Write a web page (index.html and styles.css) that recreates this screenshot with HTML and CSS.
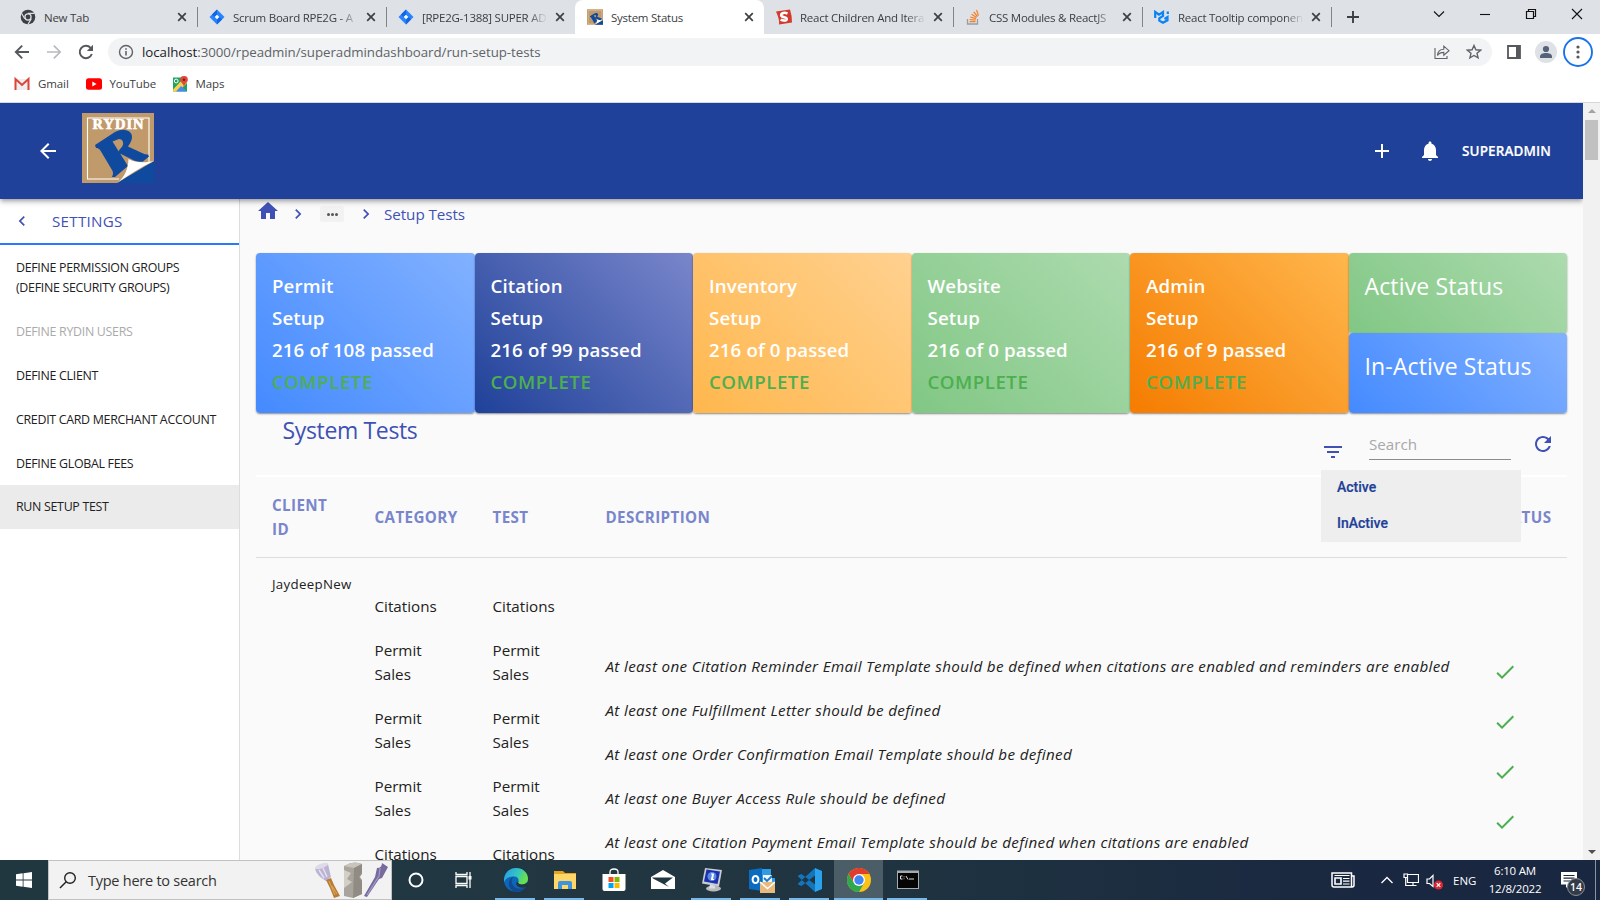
FILE: index.html
```html
<!DOCTYPE html>
<html lang="en">
<head>
<meta charset="utf-8">
<title>System Status</title>
<link rel="stylesheet" href="styles.css">
</head>
<body>
<svg width="0" height="0" class="defs">
  <defs>
    <symbol id="x" viewBox="0 0 10 10"><path d="M1.2 1.2l7.6 7.6M8.8 1.2L1.2 8.8" stroke="#3c4043" stroke-width="1.7" fill="none"/></symbol>
    <symbol id="jira" viewBox="0 0 16 16"><path d="M8 .5L15.5 8 8 15.5.5 8z" fill="#2684ff"/><path d="M8 .5v5L5.500 8 3 5.500z" fill="#1266e0"/><path d="M8 15.500v-5L10.500 8 13 10.500z" fill="#1266e0"/><path d="M8 5.700L10.300 8 8 10.300 5.700 8z" fill="#fff"/></symbol>
    <symbol id="next" viewBox="0 0 24 24"><path d="M10 6L8.590 7.410 13.170 12l-4.580 4.590L10 18l6-6z" fill="#3f51b5"/></symbol>
    <symbol id="check" viewBox="0 0 24 24"><path d="M9 16.170L4.830 12l-1.420 1.410L9 19 21 7l-1.410-1.410z" fill="#4caf50"/></symbol>
    <symbol id="rydin" viewBox="0 0 72 70"><path d="M0 0h72v70H0z" fill="#c19a6b"/><path d="M37 66H5.500V5H67v45" fill="none" stroke="#fff" stroke-width="1.100"/><path d="M13 32L33 19q7-3.500 12-1.500c8 3 5 11 1 16l14 6.500q3 1.500 6 1.500l1 2-6 5q-4 1-9-1L38 40.500c-2-2-1-3.500 1-5.500 4-4 2-9-2-9l-6.500 2.500L46 53 33 64h-3q2-4 0-7L19 38.500q-2-4-5-3.500z" fill="#104a9f"/><path d="M72 48v22H35z" fill="#104a9f"/><path d="M35 70c8-6 11-14 11.500-24 7 4 16 4 25.500 2-13 6-25 14-37 22z" fill="#fff"/></symbol>
  </defs>
</svg>

<header class="tabs">
  <div class="tab"><svg class="fav" viewBox="0 0 16 16"><circle cx="8" cy="8" r="7.300" fill="#3c4043"/><circle cx="8" cy="8" r="3.700" fill="#dee1e6"/><circle cx="8" cy="8" r="2.400" fill="#3c4043"/><path d="M8 4.300h6.500M4.700 9.800L1.500 4.300M11.200 9.900L8 15.300" stroke="#dee1e6" stroke-width="1.200"/></svg><span>New Tab</span><svg class="close"><use href="#x"/></svg></div>
  <div class="tab"><svg class="fav"><use href="#jira"/></svg><span class="fade">Scrum Board RPE2G - A</span><svg class="close"><use href="#x"/></svg></div>
  <div class="tab nosep"><svg class="fav"><use href="#jira"/></svg><span class="fade">[RPE2G-1388] SUPER AD</span><svg class="close"><use href="#x"/></svg></div>
  <div class="tab active"><svg class="fav"><use href="#rydin"/></svg><span>System Status</span><svg class="close"><use href="#x"/></svg></div>
  <div class="tab"><svg class="fav" viewBox="0 0 16 16"><path d="M0 2.500L14 .5q2 6 2 13L3 15.500q1-4-3-13z" fill="#d33a2c"/><path d="M11.500 4.600C8 2.800 4 4.500 5.500 7c1 1.600 5.500 1 5.200 3.200-.3 1.700-4 1.800-6 .3" fill="none" stroke="#fff" stroke-width="2.600"/></svg><span class="fade">React Children And Itera</span><svg class="close"><use href="#x"/></svg></div>
  <div class="tab"><svg class="fav" viewBox="0 0 16 16"><path d="M2.500 10v5h10v-5" fill="none" stroke="#9a9c9f" stroke-width="1.300"/><path d="M4.500 12.700h6M4.600 10.500l6 .7M5.200 8l5.800 1.700M6.600 5.300l5 3.200M8.700 2.800l3.800 4.700M11.500 1l2 5.600" stroke="#f48024" stroke-width="1.200"/></svg><span class="fade">CSS Modules &amp; ReactJS</span><svg class="close"><use href="#x"/></svg></div>
  <div class="tab"><svg class="fav" viewBox="0 0 16 16"><path d="M1.200 9V3L5 5.700 9 3v4L5.300 9.300v2.400L9 13.800l4.500-2.500V8L10.500 10M13.800 5V2.500" fill="none" stroke="#0a84f5" stroke-width="2.200"/></svg><span class="fade">React Tooltip componen</span><svg class="close"><use href="#x"/></svg></div>
  <svg class="newtab" viewBox="0 0 12 12"><path d="M6 0v12M0 6h12" stroke="#3c4043" stroke-width="1.900"/></svg>
  <div class="winctl">
    <svg viewBox="0 0 12 12"><path d="M1 3.500l5 5 5-5" fill="none" stroke="#111" stroke-width="1.100"/></svg>
    <svg viewBox="0 0 12 12"><path d="M1 6.500h10" stroke="#111" stroke-width="1.100"/></svg>
    <svg viewBox="0 0 12 12"><path d="M1.500 3.500h7v7h-7zM3.500 3V1.500h7v7H9" fill="none" stroke="#111" stroke-width="1.200"/></svg>
    <svg viewBox="0 0 12 12"><path d="M1 1l10 10M11 1L1 11" stroke="#111" stroke-width="1.100"/></svg>
  </div>
</header>

<div class="toolbar">
  <svg class="nav" viewBox="0 0 16 16"><path d="M15 8H2M8.200 1.600L1.800 8l6.400 6.400" fill="none" stroke="#55585d" stroke-width="1.900"/></svg>
  <svg class="nav" viewBox="0 0 16 16"><path d="M1 8h13M7.800 1.600L14.200 8l-6.400 6.400" fill="none" stroke="#b8babd" stroke-width="1.700"/></svg>
  <svg class="nav" viewBox="0 0 16 16"><path d="M13.800 10A6.200 6.200 0 1 1 12.600 3.800" fill="none" stroke="#55585d" stroke-width="2"/><path d="M15 .8v6.200H8.800z" fill="#55585d"/></svg>
  <div class="omni">
    <svg viewBox="0 0 16 16"><circle cx="8" cy="8" r="6.500" fill="none" stroke="#5f6368" stroke-width="1.400"/><path d="M8 7v4.500M8 4.200v1.600" stroke="#5f6368" stroke-width="1.600"/></svg>
    <span class="url"><b>localhost</b>:3000/rpeadmin/superadmindashboard/run-setup-tests</span>
    <svg viewBox="0 0 16 16"><path d="M1 4v10.500h12V12M3.500 11.500c.3-4 2.500-6.300 6.300-6.300V2.200l5.200 4.500-5.200 4.500V8.400c-3 0-4.800.8-6.300 3.100z" fill="none" stroke="#5f6368" stroke-width="1.100"/></svg>
    <svg viewBox="0 0 16 16"><path d="M8 1.500l1.900 4.300 4.700.4-3.600 3.100 1.100 4.600L8 11.500l-4.100 2.400L5 9.300 1.400 6.200l4.700-.4z" fill="none" stroke="#5f6368" stroke-width="1.400"/></svg>
  </div>
  <svg class="panel" viewBox="0 0 14 14"><path d="M1 1h12v12H1z" fill="none" stroke="#55585d" stroke-width="1.800"/><path d="M9 1h4v12H9z" fill="#55585d"/></svg>
  <svg class="avatar" viewBox="0 0 22 22"><circle cx="11" cy="11" r="11" fill="#dee1e6"/><circle cx="11" cy="8" r="3.100" fill="#56627a"/><path d="M5 17v-1.500c0-2.500 3-3.500 6-3.500s6 1 6 3.500V17z" fill="#56627a"/></svg>
  <svg class="kebab" viewBox="0 0 30 30"><circle cx="15" cy="15" r="14" fill="#fff" stroke="#1a73e8" stroke-width="1.900"/><g fill="#55585d"><circle cx="15" cy="10" r="1.600"/><circle cx="15" cy="15" r="1.600"/><circle cx="15" cy="20" r="1.600"/></g></svg>
</div>

<div class="bookmarks">
  <svg viewBox="0 0 16 16"><path d="M1 3h14v11H1z" fill="#eee"/><path d="M1.500 14V3L8 9l6.500-6v11" fill="none" stroke="#dc4437" stroke-width="2"/></svg><span class="b1">Gmail</span>
  <svg viewBox="0 0 16 16"><rect x="0" y="2.300" width="16" height="11.500" rx="2.500" fill="#f00"/><path d="M6.300 5.500v5l4.300-2.500z" fill="#fff"/></svg><span class="b2">YouTube</span>
  <svg viewBox="0 0 16 16"><path d="M1 1.500h14v14H1z" fill="#1ea362"/><path d="M1 13.500L12 2l3 1v4L6.500 15.500H1z" fill="#fbd14b"/><path d="M4 15.500L9 10l6 5.500z" fill="#4a89f3"/><circle cx="4.200" cy="5" r="1.900" fill="none" stroke="#fff"/><path d="M12 0a3.800 3.800 0 0 1 3.900 3.800C15.900 6.500 12.500 7.500 12 11c-.5-3.500-3.900-4.500-3.900-7.200A3.800 3.800 0 0 1 12 0z" fill="#dd4b3e"/><circle cx="12" cy="3.800" r="1.300" fill="#821a13"/></svg><span>Maps</span>
</div>

<div class="viewport">
 <div class="page">
  <div class="appbar">
    <svg class="back" viewBox="0 0 24 24"><path d="M20 11H7.830l5.590-5.590L12 4l-8 8 8 8 1.410-1.410L7.830 13H20z" fill="#fff"/></svg>
    <div class="logo"><svg><use href="#rydin"/></svg><span>RYDIN</span></div>
    <div class="grow"></div>
    <svg class="ic" viewBox="0 0 24 24"><path d="M19 13h-6v6h-2v-6H5v-2h6V5h2v6h6z" fill="#fff"/></svg>
    <svg class="ic" viewBox="0 0 24 24"><path d="M12 22c1.100 0 2-.9 2-2h-4c0 1.100.89 2 2 2zm6-6v-5c0-3.070-1.640-5.640-4.500-6.320V4c0-.83-.67-1.500-1.500-1.500s-1.500.67-1.500 1.500v.68C7.630 5.360 6 7.920 6 11v5l-2 2v1h16v-1z" fill="#fff"/></svg>
    <span class="user">SUPERADMIN</span>
  </div>
  <div class="body">
    <nav class="side">
      <div class="settings"><svg viewBox="0 0 24 24"><path d="M15.410 7.410L14 6l-6 6 6 6 1.410-1.410L10.830 12z" fill="#3f51b5"/></svg><span>SETTINGS</span></div>
      <a class="first">DEFINE PERMISSION GROUPS<br>(DEFINE SECURITY GROUPS)</a>
      <a class="off">DEFINE RYDIN USERS</a>
      <a>DEFINE CLIENT</a>
      <a>CREDIT CARD MERCHANT ACCOUNT</a>
      <a class="last">DEFINE GLOBAL FEES</a>
      <a class="sel">RUN SETUP TEST</a>
    </nav>
    <main>
      <div class="crumbs">
        <svg class="home" viewBox="0 0 24 24"><path d="M10 20v-6h4v6h5v-8h3L12 3 2 12h3v8z" fill="#3f51b5"/></svg>
        <svg class="chev"><use href="#next"/></svg>
        <span class="dots"><i></i><i></i><i></i></span>
        <svg class="chev"><use href="#next"/></svg>
        <span class="here">Setup Tests</span>
      </div>
      <section class="cards">
        <div class="card c1">Permit<br>Setup<br>216 of 108 passed<br><em>COMPLETE</em></div>
        <div class="card c2">Citation<br>Setup<br>216 of 99 passed<br><em>COMPLETE</em></div>
        <div class="card c3">Inventory<br>Setup<br>216 of 0 passed<br><em>COMPLETE</em></div>
        <div class="card c4">Website<br>Setup<br>216 of 0 passed<br><em>COMPLETE</em></div>
        <div class="card c5">Admin<br>Setup<br>216 of 9 passed<br><em>COMPLETE</em></div>
        <div class="stack"><div class="card half c4">Active Status</div><div class="card half c1">In-Active Status</div></div>
      </section>
      <div class="tools">
        <h2>System Tests</h2>
        <div class="filter"><svg viewBox="0 0 24 24"><path d="M10 18h4v-2h-4v2zM3 6v2h18V6H3zm3 7h12v-2H6v2z" fill="#3f51b5"/></svg>
          <div class="menu"><div>Active</div><div>InActive</div></div>
        </div>
        <div class="search">Search</div>
        <svg class="refresh" viewBox="0 0 24 24"><path d="M17.650 6.350C16.200 4.900 14.210 4 12 4c-4.420 0-7.990 3.580-7.990 8s3.570 8 7.990 8c3.730 0 6.840-2.550 7.730-6h-2.080c-.82 2.330-3.040 4-5.650 4-3.310 0-6-2.690-6-6s2.690-6 6-6c1.660 0 3.140.69 4.220 1.780L13 11h7V4z" fill="#3f51b5"/></svg>
      </div>
      <div class="grid thead"><div>CLIENT<br>ID</div><div>CATEGORY</div><div>TEST</div><div>DESCRIPTION</div><div class="st">STATUS</div></div>
      <div class="grid tbody">
        <div class="client">JaydeepNew</div>
        <div class="list"><p>Citations</p><p>Permit<br>Sales</p><p>Permit<br>Sales</p><p>Permit<br>Sales</p><p>Citations</p></div>
        <div class="list"><p>Citations</p><p>Permit<br>Sales</p><p>Permit<br>Sales</p><p>Permit<br>Sales</p><p>Citations</p></div>
        <div class="list desc"><p>At least one Citation Reminder Email Template should be defined when citations are enabled and reminders are enabled</p><p>At least one Fulfillment Letter should be defined</p><p>At least one Order Confirmation Email Template should be defined</p><p>At least one Buyer Access Rule should be defined</p><p>At least one Citation Payment Email Template should be defined when citations are enabled</p></div>
        <div class="checks"><svg><use href="#check"/></svg><svg><use href="#check"/></svg><svg><use href="#check"/></svg><svg><use href="#check"/></svg></div>
      </div>
    </main>
  </div>
 </div>
 <div class="scroll"><i class="up"></i><i class="thumb"></i><i class="down"></i></div>
</div>

<footer class="taskbar">
  <div class="start"><svg viewBox="0 0 16 16"><path d="M0 2.300L6.700 1.300v6.200H0zM7.500 1.200L16 0v7.500H7.500zM0 8.400h6.700v6.300L0 13.700zM7.500 8.400H16V16l-8.500-1.200z" fill="#fff"/></svg></div>
  <div class="find">
    <svg class="mag" viewBox="0 0 18 18"><circle cx="11" cy="7" r="5.300" fill="none" stroke="#222" stroke-width="1.400"/><path d="M7.200 10.800L1 17" stroke="#222" stroke-width="1.500"/></svg>
    <span>Type here to search</span>
    <svg class="art" viewBox="0 0 74 36"><path d="M1 6L14 2l3 13-5 4C7 16 2 12 1 6z" fill="#bbb3d2"/><ellipse cx="7.500" cy="4" rx="7" ry="2.300" transform="rotate(-20 7.500 4)" fill="#dedaea"/><path d="M5 8l5 8M9 6l4 9" stroke="#e4e0ef" stroke-width="1.500"/><path d="M12 18l5-2 3 7 6 11-6 2-4-10z" fill="#b87b34"/><path d="M15 19l6 14M18 24l5 8" stroke="#d9a057" stroke-width="1.200"/><path d="M30 4q9-6 18-2v10l-2 3 2 3v14l-9 4-9-2z" fill="#aaa59c"/><path d="M30 4q9-6 18-2l-8 4z" fill="#c9c5bd"/><path d="M40 6l8-4v9l-3 4 3 4v13l-9 4z" fill="#918c83"/><path d="M30 8l7 3-4 6 5 3-8 6z" fill="#d3cfc7"/><path d="M63 6q5 0 5-5l6 4-6 11-3 1-12 18-3-1 11-19z" fill="#776a9c"/><path d="M66 6l-1 8-12 19" fill="none" stroke="#a79cc6" stroke-width="1.200"/></svg>
  </div>
  <div class="app sys"><svg viewBox="0 0 24 24"><circle cx="12" cy="12" r="6.500" fill="none" stroke="#fff" stroke-width="2"/></svg></div>
  <div class="app sys view"><svg viewBox="0 0 24 24"><path d="M4 4v2.500h11V4M4 20v-2.500h11V20M4 8.500h11v7H4zM18 4v16" fill="none" stroke="#fff" stroke-width="1.300"/><path d="M16.500 8h3v3.500h-3z" fill="#fff"/></svg></div>
  <div class="app on"><svg viewBox="0 0 24 24"><defs><linearGradient id="eg" x1="0" y1="0" x2="1" y2=".4"><stop offset=".2" stop-color="#2aa7e0"/><stop offset=".6" stop-color="#35c6c0"/><stop offset="1" stop-color="#6be04a"/></linearGradient></defs><circle cx="12" cy="12" r="12" fill="#0c67b8"/><path d="M0 11C1 4 6 0 12 0c7 0 12 5 12 10.500 0 4-3 6-6.500 6-3 0-4-1-3.500-2 1.500-2 .5-6-4-6-5 0-9 2-10 6z" fill="url(#eg)"/><path d="M10 8.500c-3 2-3 7 0 10s8 3 12 0c-3 4-7 6-11 5.400-5-1.400-8-8-5-12.400 1-1.500 2.500-2.500 4-3z" fill="#13498f"/><path d="M14.300 13.500c-.8 1.500.7 3 3.700 3 2.500 0 4.300-1 5.500-2.500l1 4-2 1c-4 1.500-8.500.5-10-2-1-1.500 0-3 1.800-3.500z" fill="#213641"/></svg></div>
  <div class="app on"><svg viewBox="0 0 24 24"><path d="M1 3h9l2 2h11v16H1z" fill="#e6a420"/><path d="M1 6h22v15H1z" fill="#ffd768"/><path d="M5 21v-6q0-2 2-2h10q2 0 2 2v6h-4v-4H9v4z" fill="#3e94dd"/></svg></div>
  <div class="app"><svg viewBox="0 0 24 24"><path d="M8 6V4q0-3 4-3t4 3v2" fill="none" stroke="#fff" stroke-width="1.300"/><path d="M.5 6h23v15q0 2-2 2h-19q-2 0-2-2z" fill="#fff"/><path d="M6.500 9h5v5h-5z" fill="#f25022"/><path d="M12.500 9h5v5h-5z" fill="#7fba00"/><path d="M6.500 15h5v5h-5z" fill="#00a4ef"/><path d="M12.500 15h5v5h-5z" fill="#ffb900"/></svg></div>
  <div class="app"><svg viewBox="0 0 24 24"><path d="M0 9L12 2l12 7v12H0z" fill="#fff"/><path d="M1 9.500h21l-8 6 4 3.500L2 10.500z" fill="#213641"/></svg></div>
  <div class="app on"><svg viewBox="0 0 24 24"><path d="M5 0l17 2-3 16.500L2 15.500z" fill="#c9ccd0"/><path d="M6.500 1.500l13.500 2-2.500 12.500L4 13.500z" fill="#1c2fb0"/><circle cx="12" cy="8.500" r="4.500" fill="#5b8ae6"/><path d="M11 5.500h3v1l-1 4.500h1v1h-3v-1l1-4.500h-1z" fill="#fff"/><ellipse cx="13.500" cy="20.500" rx="7.500" ry="3" fill="#b9bbbc"/><path d="M10 16.500l5 1v3h-6z" fill="#dcdede"/></svg></div>
  <div class="app on"><svg class="wide" viewBox="0 0 26 25"><path d="M13 1h9v9h4v4H13z" fill="#2f9be5"/><path d="M14 7h9v9h-9z" fill="#eef4fa"/><path d="M15 10l3 3 5-5" fill="none" stroke="#1976c8" stroke-width="1.800"/><path d="M0 2l13-2v23L0 21z" fill="#0b6bc1"/><ellipse cx="6.500" cy="11.500" rx="2.900" ry="3.600" fill="none" stroke="#fff" stroke-width="2"/><path d="M11 14h15v11H11z" fill="#e9b87c"/><path d="M11 14l7.500 6.500L26 14" fill="none" stroke="#fff" stroke-width="1.500"/></svg></div>
  <div class="app on"><svg viewBox="0 0 24 24"><path d="M17 0l7 3v18l-7 3z" fill="#2aa3ec"/><path d="M17 0v7.500L3.500 18 0 16.500v-1zM17 24v-7.500L3.500 6 0 7.500v1z" fill="#1276bd"/></svg></div>
  <div class="app on current"><svg viewBox="0 0 24 24"><circle cx="12" cy="12" r="12" fill="#fbc116"/><path d="M1.600 6A12 12 0 0 1 22.400 6H12L6.800 15z" fill="#e33b2e"/><path d="M1.600 6A12 12 0 0 0 12 24l5.200-9H6.800z" fill="#2da94f"/><circle cx="12" cy="12" r="6" fill="#fff"/><circle cx="12" cy="12" r="4.700" fill="#4285f4"/></svg></div>
  <div class="app on"><svg viewBox="0 0 24 24"><path d="M1 2.500h22v18.500H1z" fill="#a6aaad"/><path d="M2 5h20v15H2z" fill="#050505"/><path d="M6.500 8H4.500v3h2M8 8.500v.8M8 10.500v.7M10 8l2 3.500M13 11h5" fill="none" stroke="#ddd" stroke-width="1"/></svg></div>
  <div class="grow"></div>
  <svg class="news" viewBox="0 0 24 16"><path d="M1 1h19.500v14H3q-2 0-2-2zM20.500 4H23v9q0 2-2 2" fill="none" stroke="#fff" stroke-width="1.500"/><path d="M4 6h6v6H4z" fill="none" stroke="#fff" stroke-width="1.600"/><path d="M3.500 3.500h15M12 6.500h6.500M12 9.200h6.500M12 12h6.500" stroke="#fff" stroke-width="1.200"/></svg>
  <svg class="caret" viewBox="0 0 12 8"><path d="M.5 7L6 1.500 11.500 7" fill="none" stroke="#fff" stroke-width="1.300"/></svg>
  <svg class="net" viewBox="0 0 16 14"><path d="M5 1.500h10.500v8H4.500V5M1 1h3.500v3.500H1zM2.700 4.500v8h4M10 9.500v3M6.500 12.500h7" fill="none" stroke="#fff" stroke-width="1.200"/></svg>
  <svg class="vol" viewBox="0 0 18 16"><path d="M1 5h2.500L7 1.500v11L3.500 9.500H1z" fill="none" stroke="#fff" stroke-width="1.200"/><circle cx="12.500" cy="11" r="4.600" fill="#db2534"/><path d="M10.700 9.200l3.600 3.600M14.300 9.200l-3.600 3.600" stroke="#fff" stroke-width="1.200"/></svg>
  <span class="lang">ENG</span>
  <div class="clock">6:10 AM<br>12/8/2022</div>
  <div class="notif"><svg viewBox="0 0 16 16"><path d="M0 0h16v12.500H8L5 16v-3.500H0z" fill="#fff"/><path d="M2.500 3.500h11M2.500 6.200h11M2.500 9h8" stroke="#1b2940" stroke-width="1.200"/></svg><span>14</span></div>
</footer>
</body>
</html>
```
FILE: styles.css
```css
* { box-sizing: border-box; }
body { margin: 0; width: 1600px; height: 900px; overflow: hidden; font-family: "Open Sans", "Noto Sans", sans-serif; display: flex; flex-direction: column; background: #fff; color: #212121; }
svg { display: block; flex: none; }
.defs { display: none; }
.grow { flex: 1; }

/* browser chrome */
.tabs { height: 34px; flex: none; background: #dee1e6; display: flex; align-items: center; padding-left: 8px; }
.tab { width: 189px; height: 34px; display: flex; align-items: center; padding: 0 10px 0 12px; position: relative; font-size: 11.500px; letter-spacing: -.25px; color: #3c4043; }
.tab:not(.active):not(.nosep)::after { content: ""; position: absolute; right: -1px; top: 7px; width: 1px; height: 20px; background: #808388; }
.tab.active { background: #fff; border-radius: 8px 8px 0 0; }
.fav { width: 16px; height: 16px; }
.tab span { flex: 1; min-width: 0; margin-left: 8px; white-space: nowrap; margin-right: 5px; }
.tab .fade { -webkit-mask-image: linear-gradient(90deg, #000 83%, transparent 98%); mask-image: linear-gradient(90deg, #000 83%, transparent 98%); }
.close { width: 10px; height: 10px; }
.newtab { width: 12px; height: 12px; margin-left: 16px; }
.winctl { display: flex; gap: 34px; margin-left: auto; padding: 0 17px 6px 0; }
.winctl svg { width: 12px; height: 12px; }
.toolbar { height: 36px; flex: none; display: flex; align-items: center; padding-left: 14px; }
.nav { width: 16px; height: 16px; margin-right: 16px; }
.omni { width: 1384px; height: 28px; border-radius: 14px; background: #f1f3f4; display: flex; align-items: center; padding: 0 10px 0 10px; margin-left: -2px; gap: 16px; }
.omni svg { width: 16px; height: 16px; }
.url { flex: 1; font-size: 13.300px; letter-spacing: -.05px; color: #5f6368; margin-left: -8px; }
.url b { font-weight: 400; color: #202124; }
.panel { width: 14px; height: 14px; margin-left: 15px; }
.avatar { width: 22px; height: 22px; margin-left: 14px; }
.kebab { width: 30px; height: 30px; margin-left: 6px; }
.bookmarks { height: 33px; flex: none; border-bottom: 1px solid #d5d7da; display: flex; align-items: center; padding: 0 0 5px 14px; font-size: 11.500px; letter-spacing: -.1px; color: #3c4043; }
.bookmarks svg { width: 16px; height: 16px; margin-right: 8px; }
.b1 { width: 47.500px; } .b2 { width: 62px; }

/* page */
.viewport { flex: 1; min-height: 0; display: flex; }
.page { width: 1583px; display: flex; flex-direction: column; overflow: hidden; background: #fafafa; }
.appbar { height: 96px; flex: none; background: #1f4199; display: flex; align-items: center; padding: 0 32px 0 36px; position: relative; box-shadow: 0 2px 4px -1px rgba(0,0,0,.3), 0 4px 5px rgba(0,0,0,.15); }
.back { width: 24px; height: 24px; }
.logo { position: relative; width: 72px; height: 70px; margin: -7px 0 0 22px; }
.logo svg { width: 72px; height: 70px; }
.logo span { position: absolute; left: 0; right: 0; top: 4px; text-align: center; color: #fff; font: bold 14.500px/15px "Liberation Serif", serif; letter-spacing: 1px; text-indent: 1px; -webkit-text-stroke: .6px #fff; }
.ic { width: 24px; height: 24px; margin-right: 24px; }
.ic + .ic { margin-right: 20px; }
.user { color: #fff; font-size: 13.500px; font-weight: 600; letter-spacing: .1px; width: 89px; -webkit-text-stroke: .2px #fff; }
.body { flex: 1; display: flex; min-height: 0; }
.side { width: 240px; background: #fff; border-right: 1px solid #ddd; font-size: 12.400px; letter-spacing: -.3px; line-height: 20px; }
.side a { display: block; padding: 12px 16px; white-space: nowrap; }
.side a.first { padding-top: 13px; }
.side a.off { color: #aaa; }
.side a.last { padding-bottom: 11px; }
.side a.sel { background: #ebebeb; }
.settings { height: 46px; border-bottom: 2px solid #2979ff; display: flex; align-items: center; color: #3f51b5; font-size: 15.200px; letter-spacing: .25px; }
.settings svg { width: 20px; height: 20px; margin: 0 20px 0 12px; }
main { flex: 1; padding: 0 16px; min-width: 0; }
.crumbs { height: 54px; display: flex; align-items: flex-start; color: #3f51b5; font-size: 15.200px; line-height: 22px; }
.home { width: 24px; height: 24px; margin-top: 0; }
.chev { width: 20px; height: 20px; margin: 5px 12px 0 8px; }
.dots { width: 24px; height: 16px; margin: 7px 4px 0 0; background: #f2f2f2; border-radius: 2px; display: flex; align-items: center; justify-content: center; gap: 1px; }
.dots i { width: 3px; height: 3px; border-radius: 50%; background: #555; }
.dots + .chev { margin-right: 8px; }
.here { margin-top: 4px; letter-spacing: -.05px; }
.cards { height: 160px; display: grid; grid-template-columns: repeat(6, 1fr); }
.card { padding: 17px 16px 15px; height: 160px; border-radius: 4px; color: #fff; font-size: 18.700px; letter-spacing: .12px; font-weight: 600; line-height: 32px; white-space: nowrap; box-shadow: 0 1px 2px rgba(0,0,0,.45); }
.card em { font-style: normal; color: #4caf50; letter-spacing: .5px; }
.half { height: 80px; font-size: 23px; font-weight: 400; letter-spacing: .15px; }
.c1 { background: linear-gradient(45deg, #448aff, #82b1ff); }
.c2 { background: linear-gradient(45deg, #1f4199, #7986cb); }
.c3 { background: linear-gradient(45deg, #ffb74d, #ffd190); }
.c4 { background: linear-gradient(45deg, #81c784, #addbaf); }
.c5 { background: linear-gradient(45deg, #f57c00, #ffb74d); }
.tools { height: 64px; border-bottom: 2px solid #fff; display: flex; align-items: flex-start; color: #3f51b5; padding-right: 12px; }
h2 { margin: 1px auto 0 26.500px; font-size: 23px; letter-spacing: -.35px; line-height: 32px; font-weight: 400; }
.filter { position: relative; width: 24px; height: 24px; margin-top: 27px; }
.menu { position: absolute; left: 0; top: 30px; width: 200px; height: 72px; z-index: 2; background: #eee; color: #1f3f99; font: 500 14px/35px Roboto, sans-serif; -webkit-text-stroke: .2px #1f3f99; }
.menu div { height: 36px; padding-left: 16px; }
.search { width: 142px; height: 31px; margin: 16px 20px 0 24px; border-bottom: 1px solid #8c8c8c; color: #a8a8a8; font-size: 15.200px; line-height: 30px; }
.refresh { width: 24px; height: 24px; margin-top: 19px; }
.grid { display: grid; grid-template-columns: 102.500px 118px 113px 1fr auto; padding: 0 16px; }
.thead { height: 81px; border-bottom: 1px solid #ddd; align-items: center; color: #7986cb; font-weight: 700; font-size: 15.200px; letter-spacing: .38px; line-height: 24px; }
.thead .st { margin-right: -.4px; }
.tbody { font-size: 15.200px; line-height: 24px; }
.client { font-size: 13.300px; letter-spacing: .3px; padding-top: 14px; }
.list { padding-top: 15.500px; }
.list p { margin: 20px 0; white-space: nowrap; }
.desc { padding-top: 76px; font-style: italic; letter-spacing: .345px; width: 850px; }
.checks { padding: 102px 34px 0 0; }
.checks svg { width: 24px; height: 24px; margin-bottom: 26px; }
.scroll { width: 17px; background: #f1f1f1; display: flex; flex-direction: column; align-items: center; padding: 6px 0; }
.up { border: 4px solid transparent; border-top: 0; border-bottom: 4px solid #a3a3a3; }
.thumb { width: 13px; height: 40px; margin-top: 7px; background: #c1c1c1; }
.down { margin-top: auto; border: 4px solid transparent; border-bottom: 0; border-top: 4px solid #505050; }

/* taskbar */
.taskbar { height: 40px; flex: none; display: flex; align-items: center; background: linear-gradient(90deg, #203740 0, #213641 45%, #1d3040 65%, #1a2740 85%, #1a2740); color: #fff; }
.start { width: 48px; padding-left: 16px; }
.start svg { width: 16px; height: 16px; }
.find { width: 344px; height: 40px; background: #f2f2f2; border: 1px solid #c2c2c2; display: flex; align-items: center; color: #333; font-size: 14.500px; letter-spacing: -.25px; }
.mag { width: 18px; height: 18px; margin: 0 11px 0 10px; }
.art { width: 74px; height: 36px; margin: 0 3px 0 auto; }
.app { width: 49px; height: 40px; display: flex; align-items: center; justify-content: center; position: relative; }
.app.sys { width: 48px; }
.app.view { margin-right: 3px; }
.app svg { width: 24px; height: 24px; }
.app svg.wide { width: 26px; height: 25px; margin-left: 2px; }
.on::after { content: ""; position: absolute; left: 4px; right: 5px; bottom: 0; height: 2px; background: #76b9ed; }
.current { background: #4b5d67; }
.current::after { left: 0; right: 0; }
.news { width: 24px; height: 16px; }
.caret { width: 12px; height: 8px; margin-left: 26px; }
.net { width: 16px; height: 14px; margin-left: 10px; }
.vol { width: 18px; height: 16px; margin-left: 7px; margin-top: 3px; }
.lang { font-size: 11.500px; margin-left: 9px; width: 24px; }
.clock { width: 64px; margin-left: 6px; text-align: center; font-size: 11.500px; line-height: 18px; letter-spacing: -.2px; }
.notif { position: relative; width: 49px; height: 40px; border-right: 1px solid #8a93a0; margin: 0 4px 0 0; padding: 12px 0 0 14px; }
.notif svg { width: 16px; height: 16px; }
.notif span { position: absolute; left: 20px; top: 18px; width: 18px; height: 18px; border-radius: 50%; border: 1px solid #8a8f98; background: #333b47; font-size: 10.500px; font-weight: 600; line-height: 16px; text-align: center; }
```
